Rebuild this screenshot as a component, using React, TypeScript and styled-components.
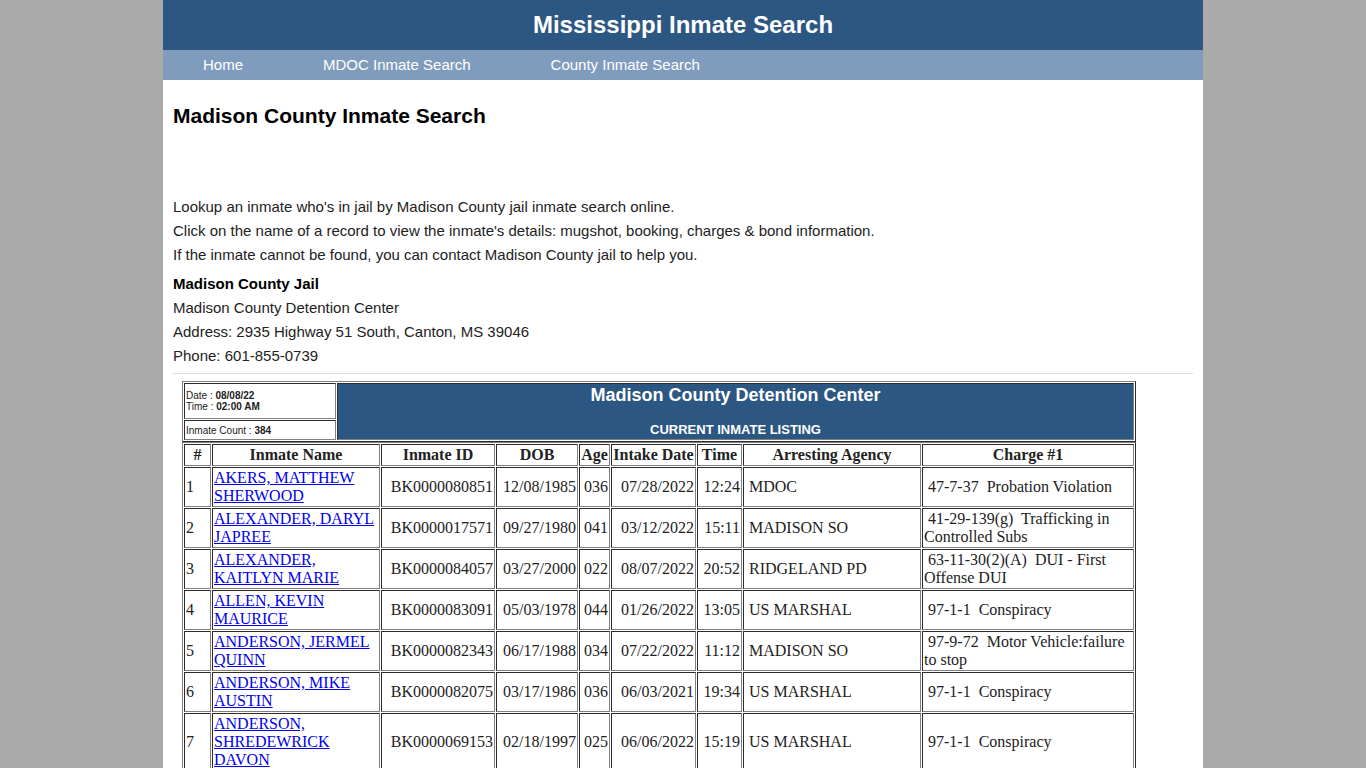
import React from "react";
import styled, { createGlobalStyle } from "styled-components";

const GlobalStyle = createGlobalStyle`
  html { scrollbar-width: none; }
  html::-webkit-scrollbar, body::-webkit-scrollbar { width: 0; height: 0; display: none; }
  body {
    margin: 0;
    background: #aaaaaa;
    font-family: "Liberation Sans", Arial, sans-serif;
    color: #222;
  }
`;

const Page = styled.div`
  width: 1040px;
  margin: 0 auto;
  background: #ffffff;
  min-height: 100vh;
`;

const Header = styled.header`
  height: 50px;
  background: #2c5782;
  display: flex;
  align-items: center;
  justify-content: center;
`;

const SiteTitle = styled.div`
  color: #ffffff;
  font-size: 24px;
  font-weight: bold;
  line-height: 28px;
`;

const Nav = styled.nav`
  height: 30px;
  background: #7f9cbd;
  display: flex;
`;

const NavLink = styled.a`
  padding: 0 40px;
  line-height: 30px;
  font-size: 15px;
  color: #ffffff;
  text-decoration: none;
`;

const Main = styled.main`
  padding: 0 10px 10px;
`;

const PageTitle = styled.h1`
  margin: 24px 0 0;
  font-size: 21px;
  line-height: 24px;
  font-weight: bold;
  color: #000;
`;

const Intro = styled.div`
  margin-top: 67px;
`;

const Line = styled.p<{ $bold?: boolean; $gap?: number }>`
  margin: ${(p) => p.$gap ?? 0}px 0 0;
  font-size: 15px;
  line-height: 24px;
  font-weight: ${(p) => (p.$bold ? "bold" : "normal")};
  color: ${(p) => (p.$bold ? "#000" : "#222")};
`;

const Divider = styled.hr`
  margin: 5px 0 0;
  border: 0;
  border-top: 1px solid #dcdcdc;
  height: 0;
`;

const Listing = styled.div`
  margin: 7px 0 0 9px;
  width: 954px;
`;

const BoxTable = styled.table`
  width: 954px;
  border: 1px outset #808080;
  border-spacing: 1px;
  table-layout: fixed;
`;

const InfoCell = styled.td<{ $h: number }>`
  box-sizing: border-box;
  width: 152px;
  height: ${(p) => p.$h}px;
  border: 1px inset #808080;
  padding: 0 1px;
  font-family: "Liberation Sans", Arial, sans-serif;
  font-size: 10px;
  line-height: 11px;
  color: #222;
  vertical-align: middle;
`;

const BannerCell = styled.td`
  box-sizing: border-box;
  border: 1px inset #808080;
  background: #2c5782;
  padding: 0;
`;

const Banner = styled.div`
  height: 55px;
  display: flex;
  flex-direction: column;
  justify-content: space-between;
  align-items: center;
  color: #ffffff;
  font-weight: bold;
`;

const BannerTitle = styled.div`
  font-size: 18px;
  line-height: 21px;
  padding-top: 1px;
`;

const BannerSub = styled.div`
  font-size: 13px;
  line-height: 15px;
  padding-bottom: 2px;
`;

const HeadCell = styled.th<{ $w: number }>`
  box-sizing: border-box;
  width: ${(p) => p.$w}px;
  border: 1px inset #808080;
  padding: 1px;
  font-family: "Liberation Serif", "Times New Roman", serif;
  font-size: 16px;
  line-height: 18px;
  font-weight: bold;
  text-align: center;
  color: #222;
  white-space: nowrap;
  overflow: hidden;
`;

const Cell = styled.td<{ $align?: "left" | "right" | "center" }>`
  box-sizing: border-box;
  border: 1px inset #808080;
  padding: 1px;
  font-family: "Liberation Serif", "Times New Roman", serif;
  font-size: 16px;
  line-height: 18px;
  text-align: ${(p) => p.$align ?? "left"};
  vertical-align: middle;
  color: #222;
`;

const NameLink = styled.a`
  color: #0000ee;
  text-decoration: underline;
`;

const columns = [
  { label: "#", w: 27 },
  { label: "Inmate Name", w: 168 },
  { label: "Inmate ID", w: 114 },
  { label: "DOB", w: 82 },
  { label: "Age", w: 31 },
  { label: "Intake Date", w: 85 },
  { label: "Time", w: 45 },
  { label: "Arresting Agency", w: 178 },
  { label: "Charge #1", w: 212 },
];

const rows = [
  ["1", "AKERS, MATTHEW SHERWOOD", "BK0000080851", "12/08/1985", "036", "07/28/2022", "12:24", "MDOC", "47-7-37\u00a0 Probation Violation"],
  ["2", "ALEXANDER, DARYL JAPREE", "BK0000017571", "09/27/1980", "041", "03/12/2022", "15:11", "MADISON SO", "41-29-139(g)\u00a0 Trafficking in Controlled Subs"],
  ["3", "ALEXANDER, KAITLYN MARIE", "BK0000084057", "03/27/2000", "022", "08/07/2022", "20:52", "RIDGELAND PD", "63-11-30(2)(A)\u00a0 DUI - First Offense DUI"],
  ["4", "ALLEN, KEVIN MAURICE", "BK0000083091", "05/03/1978", "044", "01/26/2022", "13:05", "US MARSHAL", "97-1-1\u00a0 Conspiracy"],
  ["5", "ANDERSON, JERMEL QUINN", "BK0000082343", "06/17/1988", "034", "07/22/2022", "11:12", "MADISON SO", "97-9-72\u00a0 Motor Vehicle:failure to stop"],
  ["6", "ANDERSON, MIKE AUSTIN", "BK0000082075", "03/17/1986", "036", "06/03/2021", "19:34", "US MARSHAL", "97-1-1\u00a0 Conspiracy"],
  ["7", "ANDERSON, SHREDEWRICK DAVON", "BK0000069153", "02/18/1997", "025", "06/06/2022", "15:19", "US MARSHAL", "97-1-1\u00a0 Conspiracy"],
];

export default function App() {
  return (
    <>
      <GlobalStyle />
      <Page>
        <Header>
          <SiteTitle>Mississippi Inmate Search</SiteTitle>
        </Header>
        <Nav>
          <NavLink href="#">Home</NavLink>
          <NavLink href="#">MDOC Inmate Search</NavLink>
          <NavLink href="#">County Inmate Search</NavLink>
        </Nav>
        <Main>
          <PageTitle>Madison County Inmate Search</PageTitle>
          <Intro>
            <Line>Lookup an inmate who's in jail by Madison County jail inmate search online.</Line>
            <Line>Click on the name of a record to view the inmate's details: mugshot, booking, charges &amp; bond information.</Line>
            <Line>If the inmate cannot be found, you can contact Madison County jail to help you.</Line>
            <Line $bold $gap={5}>Madison County Jail</Line>
            <Line>Madison County Detention Center</Line>
            <Line>Address: 2935 Highway 51 South, Canton, MS 39046</Line>
            <Line>Phone: 601-855-0739</Line>
          </Intro>
          <Divider />
          <Listing>
            <BoxTable>
              <tbody>
                <tr>
                  <InfoCell $h={36}>
                    Date : <b>08/08/22</b>
                    <br />
                    Time : <b>02:00 AM</b>
                  </InfoCell>
                  <BannerCell rowSpan={2}>
                    <Banner>
                      <BannerTitle>Madison County Detention Center</BannerTitle>
                      <BannerSub>CURRENT INMATE LISTING</BannerSub>
                    </Banner>
                  </BannerCell>
                </tr>
                <tr>
                  <InfoCell $h={20}>
                    Inmate Count : <b>384</b>
                  </InfoCell>
                </tr>
              </tbody>
            </BoxTable>
            <BoxTable>
              <thead>
                <tr>
                  {columns.map((c) => (
                    <HeadCell key={c.label} $w={c.w}>
                      {c.label}
                    </HeadCell>
                  ))}
                </tr>
              </thead>
              <tbody>
                {rows.map((r) => (
                  <tr key={r[0]}>
                    <Cell>{r[0]}</Cell>
                    <Cell>
                      <NameLink href="#">{r[1]}</NameLink>
                    </Cell>
                    <Cell $align="right">{r[2]}</Cell>
                    <Cell $align="right">{r[3]}</Cell>
                    <Cell $align="right">{r[4]}</Cell>
                    <Cell $align="right">{r[5]}</Cell>
                    <Cell $align="right">{r[6]}</Cell>
                    <Cell>{"\u00a0" + r[7]}</Cell>
                    <Cell>{"\u00a0" + r[8]}</Cell>
                  </tr>
                ))}
              </tbody>
            </BoxTable>
          </Listing>
        </Main>
      </Page>
    </>
  );
}
